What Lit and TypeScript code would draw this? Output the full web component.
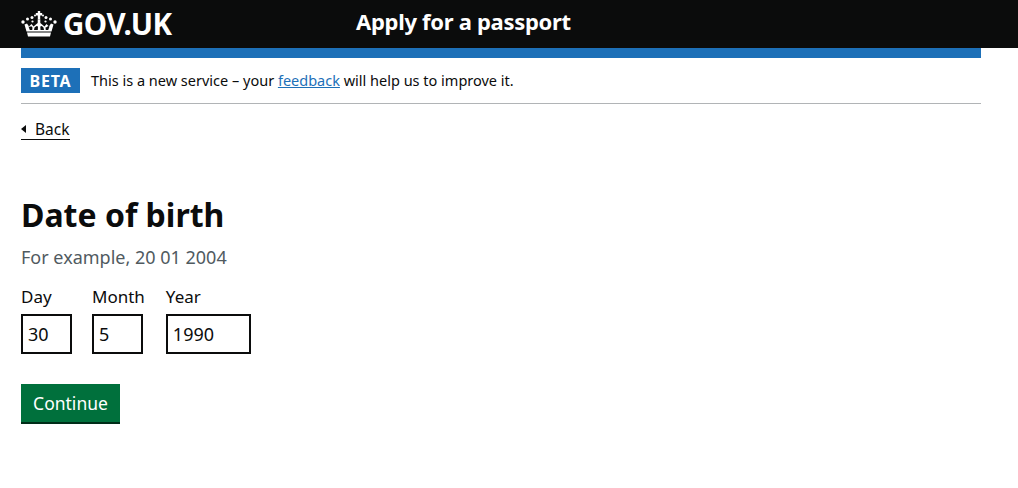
import { LitElement, html, css } from 'lit';
import { customElement } from 'lit/decorators.js';

const crown = html`<svg class="crown" viewBox="0 0 36 26" width="36" height="26" fill="#fff" aria-hidden="true">
  <path fill-rule="evenodd" d="M5.500 20.500 3.500 13.500 6 12.500 8 15.500 10.500 13 12.500 15.500 15.500 13 16.700 12V8.500h2.600V12l1.200 1 3 2.500 2-2.500 2.500 2.500 2-3 2.500 1-2 7zM7.500 15.500l1.300 3.500h2.400l.3-2.500-1.500-1.500-1 1zM13.500 16.500l-.5 2.500h3.800l.2-3.500-1.500-.5zM19.300 15.500l.2 3.500h3.500l-.5-2.500-1.700-1.500zM24.500 16.500l.3 2.500h2.400l1.300-3.500-1.500-.5-1 1z"/>
  <path d="M6 21.500h24l-1 4H7z"/>
  <path d="M16.800 0h2.400v2h2v2.400h-2v4h-2.400v-4h-2V2h2z"/>
  <circle cx="11" cy="6.500" r="1.500"/><circle cx="25" cy="6.500" r="1.500"/>
  <circle cx="14" cy="4.500" r="1"/><circle cx="22" cy="4.500" r="1"/>
  <circle cx="6.500" cy="8" r="1.500"/><circle cx="29.500" cy="8" r="1.500"/>
  <circle cx="2" cy="11" r="1.700"/><circle cx="34" cy="11" r="1.700"/>
  <circle cx="11.500" cy="10.500" r="1.100"/><circle cx="24.500" cy="10.500" r="1.100"/>
</svg>`;

@customElement('app-root')
export class AppRoot extends LitElement {
  static override styles = css`
    :host {
      display: block;
      min-height: 488px;
      background: #fff;
      color: #0b0c0c;
      font-family: "Noto Sans", "Liberation Sans", sans-serif;
    }

    .header {
      display: flex;
      align-items: center;
      height: 48px;
      padding-left: 21px;
      background: #0b0c0c;
      color: #fff;
      font-weight: 700;
    }

    .logo {
      display: flex;
      align-items: center;
      gap: 6px;
      width: 335px;
      font-size: 29.500px;
      letter-spacing: -0.5px;
    }

    .logo span {
      margin-top: -2px;
    }

    .service {
      margin-top: -6px;
      font-size: 22px;
      letter-spacing: -0.3px;
    }

    .container {
      width: 960px;
      margin-left: 21px;
    }

    .header-rule {
      height: 10px;
      background: #1d70b8;
    }

    .phase {
      display: flex;
      align-items: center;
      gap: 11px;
      height: 45px;
      border-bottom: 1px solid #b1b4b6;
      font-size: 14.500px;
    }

    .phase span {
      margin-top: -2px;
    }

    .tag {
      display: flex;
      align-items: center;
      justify-content: center;
      width: 59px;
      height: 25px;
      background: #1d70b8;
      color: #fff;
      font-size: 16px;
      font-weight: 700;
      letter-spacing: 0.8px;
    }

    .phase a {
      color: #1d70b8;
    }

    .back {
      display: inline-flex;
      align-items: center;
      gap: 9px;
      margin-top: 15px;
      height: 20px;
      border-bottom: 1px solid #0b0c0c;
      font-size: 15.500px;
      line-height: 18px;
      color: #0b0c0c;
      text-decoration: none;
    }

    .back i {
      border-style: solid;
      border-width: 4px 5px 4px 0;
      border-color: transparent #0b0c0c;
    }

    h1 {
      margin: 55px 0 0;
      font-size: 32px;
      line-height: 40px;
    }

    .hint {
      margin-top: 10px;
      font-size: 18px;
      line-height: 25px;
      color: #505a5f;
    }

    .date {
      display: flex;
      margin-top: 15px;
    }

    .date-item {
      margin-right: 20px;
    }

    .date-item:nth-child(2) {
      margin-right: 21px;
    }

    .date-item label {
      display: block;
      margin-bottom: 6px;
      font-size: 17px;
      line-height: 23px;
    }

    input {
      display: block;
      box-sizing: border-box;
      height: 40px;
      padding: 5px;
      border: 2px solid #0b0c0c;
      border-radius: 0;
      background: #fff;
      color: #0b0c0c;
      font: 18px "Noto Sans", "Liberation Sans", sans-serif;
      outline: none;
    }

    .w2 { width: 51px; }
    .w4 { width: 85px; }

    button {
      display: block;
      width: 99px;
      height: 40px;
      margin-top: 30px;
      padding: 0;
      border: 0;
      border-bottom: 2px solid #002d18;
      background: #00703c;
      color: #fff;
      font: 17.500px "Noto Sans", "Liberation Sans", sans-serif;
    }
  `;

  override render() {
    return html`
      <header class="header">
        <div class="logo">${crown}<span>GOV.UK</span></div>
        <div class="service">Apply for a passport</div>
      </header>
      <main class="container">
        <div class="header-rule"></div>
        <div class="phase">
          <strong class="tag">BETA</strong>
          <span>This is a new service – your <a href="#">feedback</a> will help us to improve it.</span>
        </div>
        <a class="back" href="#"><i></i>Back</a>
        <h1>Date of birth</h1>
        <div class="hint">For example, 20 01 2004</div>
        <div class="date">
          <div class="date-item"><label>Day</label><input class="w2" .value=${'30'} /></div>
          <div class="date-item"><label>Month</label><input class="w2" .value=${'5'} /></div>
          <div class="date-item"><label>Year</label><input class="w4" .value=${'1990'} /></div>
        </div>
        <button>Continue</button>
      </main>
    `;
  }
}
